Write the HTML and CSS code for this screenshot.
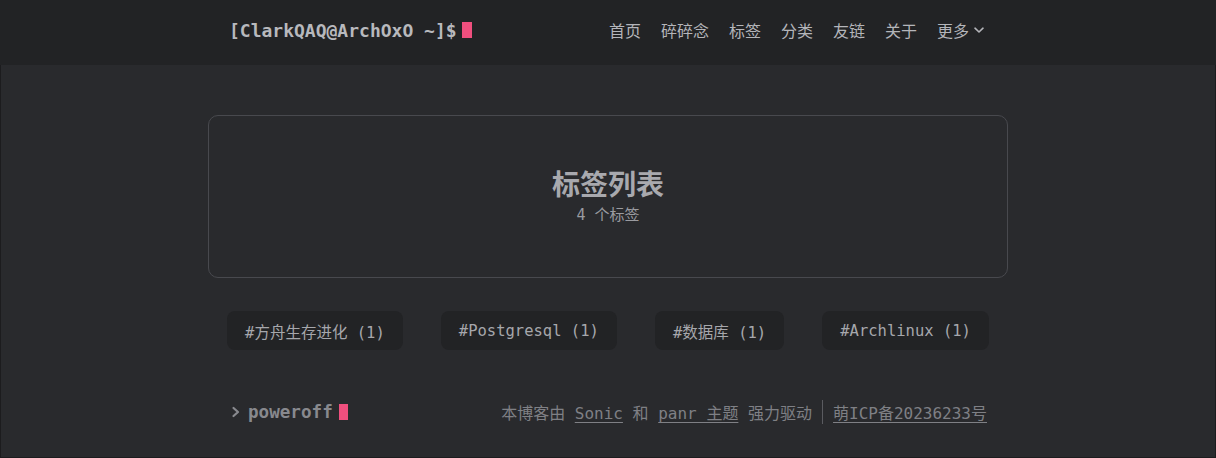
FILE: index.html
```html
<!DOCTYPE html>
<html lang="zh-CN">
<head>
<meta charset="utf-8">
<title>标签列表</title>
<link rel="stylesheet" href="styles.css">
</head>
<body>
<header class="site-header">
  <div class="header-inner">
    <a class="logo" href="#">[ClarkQAQ@ArchOxO ~]$<span class="cursor"></span></a>
    <nav class="menu">
      <a href="#">首页</a>
      <a href="#">碎碎念</a>
      <a href="#">标签</a>
      <a href="#">分类</a>
      <a href="#">友链</a>
      <a href="#">关于</a>
      <a href="#" class="more">更多<svg width="12" height="12" viewBox="0 0 12 12"><path d="M2 4.2 L6 8 L10 4.2" fill="none" stroke="currentColor" stroke-width="1.6" stroke-linecap="round" stroke-linejoin="round"/></svg></a>
    </nav>
  </div>
</header>
<main class="content">
  <section class="card">
    <h1 class="card-title">标签列表</h1>
    <p class="card-sub">4 个标签</p>
  </section>
  <div class="tags">
    <a class="tag" href="#">#方舟生存进化 (1)</a>
    <a class="tag" href="#">#Postgresql (1)</a>
    <a class="tag" href="#">#数据库 (1)</a>
    <a class="tag" href="#">#Archlinux (1)</a>
  </div>
</main>
<footer class="site-footer">
  <div class="footer-inner">
    <div class="poweroff"><svg class="prompt" width="10" height="12" viewBox="0 0 10 12"><path d="M2.5 2 L7 6 L2.5 10" fill="none" stroke="currentColor" stroke-width="2.2" stroke-linecap="round" stroke-linejoin="round"/></svg><span>poweroff</span><span class="cursor small"></span></div>
    <div class="copyright">
      <span>本博客由 <a href="#">Sonic</a> 和 <a href="#">panr 主题</a> 强力驱动</span>
      <span class="sep"></span>
      <a href="#">萌ICP备20236233号</a>
    </div>
  </div>
</footer>
</body>
</html>
```

FILE: styles.css
```css
* { box-sizing: border-box; }
html, body { margin: 0; padding: 0; }
body {
  background: #292a2d;
  color: #a9aaaf;
  font-family: "DejaVu Sans Mono", "Noto Sans CJK SC", monospace;
  height: 458px;
  overflow: hidden;
  box-shadow: inset 0 0 0 1px #1c1c1e;
}
a { color: inherit; text-decoration: none; }

.site-header {
  background: #222325;
  height: 65px;
}
.header-inner {
  width: 760px;
  margin: 0 auto;
  height: 60px;
  display: flex;
  align-items: center;
  justify-content: space-between;
  padding-left: 1px;
  padding-right: 3px;
}
.logo {
  font-size: 18px;
  font-weight: bold;
  color: #b8b9bd;
  display: flex;
  align-items: center;
  font-family: "DejaVu Sans Mono", monospace;
}
.cursor {
  display: inline-block;
  width: 10px;
  height: 16px;
  background: #ef4f7e;
  margin-left: 5px;
}
.menu {
  display: flex;
  gap: 20px;
  font-family: "Noto Sans CJK SC", sans-serif;
  font-size: 16px;
  color: #b4b5ba;
}
.menu a { display: flex; align-items: center; }
.more svg { margin-left: 4px; }

.content {
  width: 800px;
  margin: 0 auto;
  padding-top: 50px;
}
.card {
  border: 1px solid #48494e;
  border-radius: 10px;
  height: 163px;
  padding-top: 50px;
  text-align: center;
}
.card-title {
  margin: 0;
  font-family: "Noto Sans CJK SC", sans-serif;
  font-size: 28px;
  line-height: 34px;
  font-weight: bold;
  color: #a8a9ae;
}
.card-sub {
  margin: 4px 0 0;
  font-size: 15px;
  line-height: 22px;
  color: #9a9ba0;
}
.tags {
  margin-top: 33px;
  display: flex;
  justify-content: space-around;
}
.tag {
  background: #222325;
  border-radius: 8px;
  height: 39px;
  padding: 0 18px;
  display: flex;
  align-items: center;
  font-size: 15.5px;
  color: #a6a7ac;
  white-space: pre;
}

.site-footer { margin-top: 50px; }
.footer-inner {
  width: 760px;
  margin: 0 auto;
  display: flex;
  align-items: center;
  justify-content: space-between;
  padding-left: 3px;
  padding-right: 1px;
}
.poweroff {
  font-size: 17.6px;
  font-weight: bold;
  color: #88898e;
  display: flex;
  align-items: center;
}
.prompt { margin-right: 7px; }
.cursor.small { width: 9px; height: 16px; margin-left: 6px; }
.copyright {
  display: flex;
  align-items: center;
  font-size: 16px;
  color: #7f8085;
  white-space: pre;
}
.copyright a { text-decoration: underline; text-underline-offset: 3px; }
.sep {
  display: inline-block;
  width: 1px;
  height: 24px;
  background: #5a5b60;
  margin: 0 10px;
}
```
